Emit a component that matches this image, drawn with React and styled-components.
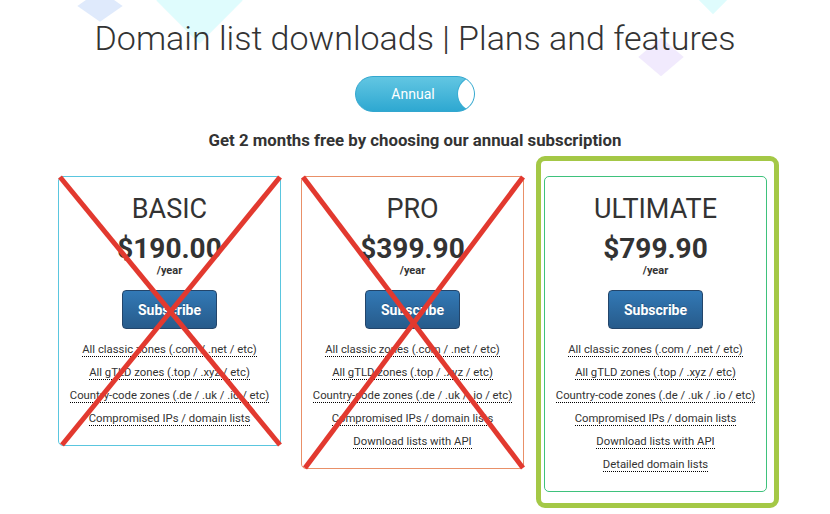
import React from 'react';
import styled, { createGlobalStyle } from 'styled-components';

const GlobalStyle = createGlobalStyle`
    html, body {
        margin: 0;
        padding: 0;
        background: #fff;
    }
    body {
        font-family: Roboto, "Liberation Sans", Arial, sans-serif;
        color: #333;
    }
`;

const Page = styled.div`
    position: relative;
    width: 830px;
    height: 514px;
    overflow: hidden;
`;

const Diamond = styled.div`
    position: absolute;
    left: ${props => props.x - props.size / 2}px;
    top: ${props => props.y - props.size / 2}px;
    width: ${props => props.size}px;
    height: ${props => props.size}px;
    background: ${props => props.color};
    transform: scaleY(${props => props.squash || 1}) rotate(45deg);
    z-index: 0;
`;

const Content = styled.div`
    position: relative;
    z-index: 1;
    display: flex;
    flex-direction: column;
    align-items: center;
    padding-top: 18px;
`;

const Title = styled.h1`
    margin: 0;
    font-size: 34px;
    line-height: 40px;
    font-weight: 300;
    color: #333;
    text-align: center;
`;

const Toggle = styled.div`
    position: relative;
    margin-top: 18px;
    width: 120px;
    height: 36px;
    box-sizing: border-box;
    border-radius: 18px;
    border: 1px solid #33a7cf;
    background: linear-gradient(to bottom, #62c6e2 0%, #2ea8d1 100%);
    overflow: hidden;
    display: flex;
    align-items: center;
    justify-content: center;
`;

const ToggleLabel = styled.span`
    color: #fff;
    font-size: 14px;
    margin-right: 4px;
`;

const Knob = styled.span`
    position: absolute;
    top: 0;
    left: 102px;
    width: 34px;
    height: 34px;
    border-radius: 50%;
    background: #fff;
    box-shadow: 0 0 0 1px #3aaed4;
`;

const Subtitle = styled.p`
    margin: 18px 0 0;
    font-size: 16.8px;
    line-height: 20px;
    font-weight: 700;
    color: #333;
`;

const Plans = styled.div`
    align-self: stretch;
    display: flex;
    align-items: flex-start;
    gap: 20px;
    padding-left: 58px;
    margin-top: 26px;
`;

const PlanSlot = styled.div`
    position: relative;
    width: 223px;
`;

const Highlight = styled.div`
    position: absolute;
    left: -8px;
    top: -20px;
    right: -12px;
    bottom: -16px;
    border: 5px solid #a4c846;
    border-radius: 9px;
    pointer-events: none;
`;

const Card = styled.div`
    position: relative;
    box-sizing: border-box;
    width: 100%;
    border: 1px solid ${props => props.tone};
    border-radius: 5px;
    background: #fff;
    padding: 17px 8px 15px;
    display: flex;
    flex-direction: column;
    align-items: center;
    text-align: center;
`;

const PlanName = styled.h2`
    margin: 0;
    font-size: 27px;
    line-height: 30px;
    font-weight: 400;
    color: #333;
`;

const Price = styled.div`
    margin-top: 11px;
    font-size: 28px;
    line-height: 28px;
    font-weight: 700;
    color: #333;
`;

const Period = styled.div`
    margin-top: 1px;
    font-size: 11px;
    line-height: 13px;
    font-weight: 700;
    color: #333;
`;

const SubscribeButton = styled.button`
    margin-top: 13px;
    width: 95px;
    height: 39px;
    border: 1px solid #23456a;
    border-radius: 4px;
    background: linear-gradient(to bottom, #3279b6 0%, #275b8b 100%);
    color: #fff;
    font-family: inherit;
    font-size: 14px;
    font-weight: 700;
    text-shadow: 0 -1px 0 rgba(0, 0, 0, 0.2);
    cursor: pointer;
`;

const Features = styled.ul`
    list-style: none;
    margin: 9px 0 0;
    padding: 0;
`;

const Feature = styled.li`
    font-size: 11.3px;
    line-height: 23px;
    white-space: nowrap;
`;

const FeatureLink = styled.span`
    color: #333;
    border-bottom: 1px dotted #000;
`;

const CrossSvg = styled.svg`
    position: absolute;
    left: 0;
    top: 0;
    width: 100%;
    height: 100%;
    overflow: visible;
    pointer-events: none;
`;

const Cross = () => (
    <CrossSvg>
        <line x1="1" y1="0" x2="100%" y2="100%" stroke="#e2392f" strokeWidth="5" />
        <line x1="100%" y1="0" x2="3" y2="100%" stroke="#e2392f" strokeWidth="5" />
    </CrossSvg>
);

const features = [
    'All classic zones (.com / .net / etc)',
    'All gTLD zones (.top / .xyz / etc)',
    'Country-code zones (.de / .uk / .io / etc)',
    'Compromised IPs / domain lists',
    'Download lists with API',
    'Detailed domain lists',
];

const plans = [
    { name: 'BASIC', price: '$190.00', tone: '#5ac6df', count: 4, crossed: true },
    { name: 'PRO', price: '$399.90', tone: '#e99068', count: 5, crossed: true },
    { name: 'ULTIMATE', price: '$799.90', tone: '#3ec27c', count: 6, highlighted: true },
];

const App = () => (
    <Page>
        <GlobalStyle />
        <Diamond x={100} y={6} size={32} squash={0.7} color="#dfeafc" />
        <Diamond x={199} y={0} size={61} color="#dffcfd" />
        <Diamond x={713} y={0} size={20} color="#dffcfd" />
        <Diamond x={661} y={57} size={32} squash={0.85} color="#f1eafd" />
        <Content>
            <Title>Domain list downloads | Plans and features</Title>
            <Toggle>
                <ToggleLabel>Annual</ToggleLabel>
                <Knob />
            </Toggle>
            <Subtitle>Get 2 months free by choosing our annual subscription</Subtitle>
            <Plans>
                {plans.map(plan => (
                    <PlanSlot key={plan.name}>
                        {plan.highlighted && <Highlight />}
                        <Card tone={plan.tone}>
                            <PlanName>{plan.name}</PlanName>
                            <Price>{plan.price}</Price>
                            <Period>/year</Period>
                            <SubscribeButton>Subscribe</SubscribeButton>
                            <Features>
                                {features.slice(0, plan.count).map(f => (
                                    <Feature key={f}>
                                        <FeatureLink>{f}</FeatureLink>
                                    </Feature>
                                ))}
                            </Features>
                            {plan.crossed && <Cross />}
                        </Card>
                    </PlanSlot>
                ))}
            </Plans>
        </Content>
    </Page>
);

export default App;
